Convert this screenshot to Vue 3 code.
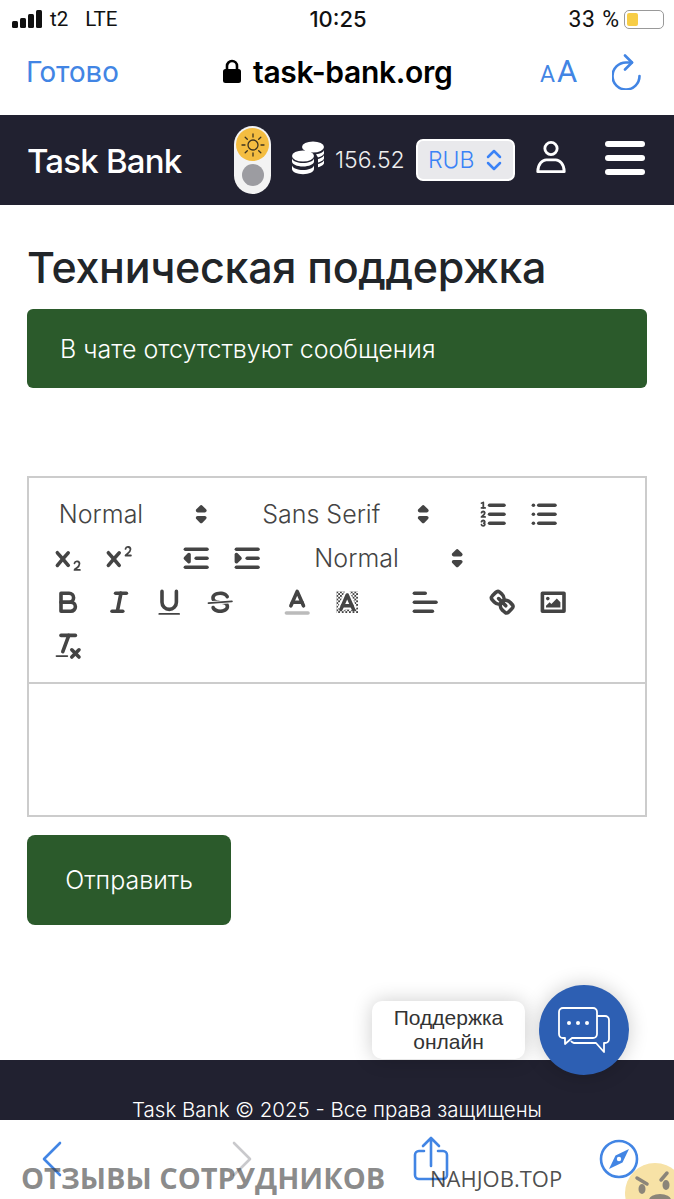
<template>
  <div class="screen">
    <!-- iOS status bar -->
    <div class="status">
      <div class="status-left">
        <span class="signal"><i></i><i></i><i></i><i></i></span>
        <span>t2</span>
        <span class="lte">LTE</span>
      </div>
      <div class="clock">10:25</div>
      <div class="status-right">
        <span class="percent">33 %</span>
        <span class="battery"><b></b></span>
      </div>
    </div>

    <!-- safari top bar -->
    <div class="browser">
      <span class="done">Готово</span>
      <div class="address">
        <svg width="20" height="25" viewBox="0 0 20 25">
          <path d="M5 11V7a5 5 0 0 1 10 0v4" fill="none" stroke="#000" stroke-width="2.6" />
          <rect x="1" y="10" width="18" height="14" rx="2.5" fill="#000" />
        </svg>
        <span>task-bank.org</span>
      </div>
      <span class="aa"><small>A</small>A</span>
      <svg class="reload" width="30" height="36" viewBox="0 0 30 36" fill="none" stroke="#4285e4" stroke-width="2.6" stroke-linecap="round" stroke-linejoin="round">
        <path d="M20 8.500H14A13.500 13.500 0 1 0 27.500 22" />
        <path d="M13 1.500l7 7-7 7" />
      </svg>
    </div>

    <!-- site header -->
    <header class="nav">
      <span class="brand">Task Bank</span>
      <div class="toggle">
        <span class="sun">
          <svg width="26" height="26" viewBox="0 0 26 26" fill="none" stroke="#3d3320" stroke-width="1.3" stroke-linecap="round">
            <circle cx="13" cy="13" r="5" />
            <path d="M13 2v3M13 21v3M2 13h3M21 13h3M5.2 5.2l2.1 2.1M18.7 18.7l2.1 2.1M5.2 20.8l2.1-2.1M18.7 7.3l2.1-2.1" />
          </svg>
        </span>
        <span class="moon"></span>
      </div>
      <svg class="coins" width="34" height="34" viewBox="0 0 34 34" fill="#fff">
        <ellipse cx="22" cy="6" rx="11" ry="5.5" />
        <path d="M25 13.2c4-.4 8-2 8-4.4v3.4c0 1.700-3 3.400-6 4.200zM27 18c3-.7 6-2.300 6-4.200v3.400c0 1.900-3 3.500-6 4.200zM27 23c3-.7 6-2.300 6-4.200v3.200c0 1.900-3 3.500-6 4.200z" />
        <ellipse cx="12" cy="15" rx="11" ry="5.500" />
        <path d="M1 17.500c1 2.800 5.500 4.500 11 4.500s10-1.700 11-4.500v3c0 2.800-5 5-11 5s-11-2.200-11-5zM1 24.500c1 2.800 5.500 4.500 11 4.500s10-1.700 11-4.500v3.500c0 3-5 5.200-11 5.200s-11-2.200-11-5.200z" />
      </svg>
      <span class="balance">156.52</span>
      <div class="currency">
        <span>RUB</span>
        <svg width="16" height="24" viewBox="0 0 16 24" fill="none" stroke="#3b82f6" stroke-width="2.500" stroke-linecap="round" stroke-linejoin="round">
          <path d="M2 9l6-6 6 6M2 15l6 6 6-6" />
        </svg>
      </div>
      <svg class="user" width="32" height="34" viewBox="0 0 32 36" fill="none" stroke="#fff" stroke-width="3">
        <circle cx="16" cy="9" r="6.500" />
        <path d="M2 33.500c0-8 5-12.500 9-12.500h10c4 0 9 4.500 9 12.500z" stroke-linejoin="round" />
      </svg>
      <div class="burger"><i></i><i></i><i></i></div>
    </header>

    <main class="content">
      <h1>Техническая поддержка</h1>
      <div class="alert">В чате отсутствуют сообщения</div>

      <div class="toolbar">
        <span class="picker header-p">Normal
          <svg viewBox="0 0 18 18"><polygon class="fs" points="7 11 9 13 11 11 7 11" /><polygon class="fs" points="7 7 9 5 11 7 7 7" /></svg>
        </span>
        <span class="picker font-p">Sans Serif
          <svg viewBox="0 0 18 18"><polygon class="fs" points="7 11 9 13 11 11 7 11" /><polygon class="fs" points="7 7 9 5 11 7 7 7" /></svg>
        </span>
        <span class="group">
          <button>
            <svg viewBox="0 0 18 18">
              <line class="st" x1="7" x2="15" y1="4" y2="4" /><line class="st" x1="7" x2="15" y1="9" y2="9" /><line class="st" x1="7" x2="15" y1="14" y2="14" />
              <line class="st thin" x1="2.500" x2="4.500" y1="5.500" y2="5.500" />
              <path class="fl" d="M3.500,6A0.500,0.500,0,0,1,3,5.500V3.085l-0.276.138A0.500,0.500,0,0,1,2.053,3c-0.124-.247-0.023-0.324.224-0.447l1-.500A0.500,0.500,0,0,1,4,2.500v3A0.500,0.500,0,0,1,3.500,6Z" />
              <path class="st thin" d="M4.500,10.500h-2c0-.234,1.850-1.076,1.850-2.234A0.959,0.959,0,0,0,2.500,8.156" />
              <path class="st thin" d="M2.500,14.846a0.959,0.959,0,0,0,1.850-.109A0.700,0.700,0,0,0,3.750,14a0.688,0.688,0,0,0,.600-0.736,0.959,0.959,0,0,0-1.850-.109" />
            </svg>
          </button>
          <button>
            <svg viewBox="0 0 18 18">
              <line class="st" x1="6" x2="15" y1="4" y2="4" /><line class="st" x1="6" x2="15" y1="9" y2="9" /><line class="st" x1="6" x2="15" y1="14" y2="14" />
              <line class="st" x1="3" x2="3" y1="4" y2="4" /><line class="st" x1="3" x2="3" y1="9" y2="9" /><line class="st" x1="3" x2="3" y1="14" y2="14" />
            </svg>
          </button>
        </span>
        <span class="group">
          <button>
            <svg viewBox="0 0 18 18">
              <path class="fl" d="M15.500,15H13.861a3.858,3.858,0,0,0,1.914-2.975,1.800,1.800,0,0,0-1.600-1.751A1.921,1.921,0,0,0,12.021,11.700a0.500,0.500,0,1,0,.957.291h0a0.914,0.914,0,0,1,1.053-.725,0.810,0.810,0,0,1,.744.762c0,1.076-1.170,1.870-1.940,2.431A1.456,1.456,0,0,0,12,15.500a0.500,0.500,0,0,0,.500.500h3A0.500,0.500,0,0,0,15.500,15Z" />
              <path class="fl" d="M9.650,5.241a1,1,0,0,0-1.409.108L6,7.964,3.759,5.349A1,1,0,0,0,2.192,6.592Q2.215,6.621,2.241,6.649L4.684,9.500,2.241,12.350A1,1,0,0,0,3.710,13.707q0.026-.028.049-.057L6,11.036,8.241,13.650a1,1,0,1,0,1.567-1.243Q9.785,12.378,9.759,12.350L7.316,9.500,9.759,6.651A1,1,0,0,0,9.650,5.241Z" />
            </svg>
          </button>
          <button>
            <svg viewBox="0 0 18 18">
              <path class="fl" d="M15.500,7H13.861a4.015,4.015,0,0,0,1.914-2.975,1.800,1.800,0,0,0-1.600-1.751A1.922,1.922,0,0,0,12.021,3.700a0.500,0.500,0,1,0,.957.291,0.917,0.917,0,0,1,1.053-.725,0.810,0.810,0,0,1,.744.762c0,1.077-1.164,1.925-1.934,2.486A1.423,1.423,0,0,0,12,7.500a0.500,0.500,0,0,0,.500.500h3A0.500,0.500,0,0,0,15.500,7Z" />
              <path class="fl" d="M9.651,5.241a1,1,0,0,0-1.410.108L6,7.964,3.759,5.349a1,1,0,1,0-1.519,1.300L4.683,9.500,2.240,12.350a1,1,0,1,0,1.519,1.300L6,11.036,8.241,13.650a1,1,0,0,0,1.519-1.300L7.317,9.500,9.759,6.651A1,1,0,0,0,9.651,5.241Z" />
            </svg>
          </button>
        </span>
        <span class="group">
          <button>
            <svg viewBox="0 0 18 18">
              <line class="st" x1="3" x2="15" y1="14" y2="14" /><line class="st" x1="3" x2="15" y1="4" y2="4" /><line class="st" x1="9" x2="15" y1="9" y2="9" />
              <polyline class="fs" points="5 7 5 11 3 9 5 7" />
            </svg>
          </button>
          <button>
            <svg viewBox="0 0 18 18">
              <line class="st" x1="3" x2="15" y1="14" y2="14" /><line class="st" x1="3" x2="15" y1="4" y2="4" /><line class="st" x1="9" x2="15" y1="9" y2="9" />
              <polyline class="fs" points="3 7 3 11 5 9 3 7" />
            </svg>
          </button>
        </span>
        <span class="picker header-p">Normal
          <svg viewBox="0 0 18 18"><polygon class="fs" points="7 11 9 13 11 11 7 11" /><polygon class="fs" points="7 7 9 5 11 7 7 7" /></svg>
        </span>
        <span class="group">
          <button>
            <svg viewBox="0 0 18 18">
              <path class="st" d="M5,4H9.500A2.500,2.500,0,0,1,12,6.500v0A2.500,2.500,0,0,1,9.500,9H5V4Z" />
              <path class="st" d="M5,9h5.500A2.500,2.500,0,0,1,13,11.500v0A2.500,2.500,0,0,1,10.500,14H5V9Z" />
            </svg>
          </button>
          <button>
            <svg viewBox="0 0 18 18">
              <line class="st" x1="7" x2="13" y1="4" y2="4" /><line class="st" x1="5" x2="11" y1="14" y2="14" /><line class="st" x1="8" x2="10" y1="14" y2="4" />
            </svg>
          </button>
          <button>
            <svg viewBox="0 0 18 18">
              <path class="st" d="M5,3V9a4,4,0,0,0,4,4H9a4,4,0,0,0,4-4V3" />
              <rect class="fl" height="1" rx=".5" ry=".5" width="12" x="3" y="15" />
            </svg>
          </button>
          <button>
            <svg viewBox="0 0 18 18">
              <line class="st thin" x1="15.500" x2="2.500" y1="8.500" y2="9.500" />
              <path class="fl" d="M9.007,8C6.542,7.791,6,7.519,6,6.500,6,5.792,7.283,5,9,5c1.571,0,2.765.679,2.969,1.309a1,1,0,0,0,1.900-.617C13.356,4.106,11.354,3,9,3,6.200,3,4,4.538,4,6.500a3.200,3.200,0,0,0,.500,1.843Z" />
              <path class="fl" d="M8.984,10C11.457,10.208,12,10.479,12,11.500c0,.708-1.283,1.500-3,1.500-1.571,0-2.765-.679-2.969-1.309a1,1,0,1,0-1.900.617C4.644,13.894,6.646,15,9,15c2.800,0,5-1.538,5-3.500a3.200,3.200,0,0,0-.500-1.843Z" />
            </svg>
          </button>
        </span>
        <span class="group">
          <button>
            <svg viewBox="0 0 18 18">
              <line class="label" x1="3" x2="15" y1="15" y2="15" />
              <polyline class="st" points="5.500 11 9 3 12.500 11" />
              <line class="st" x1="11.630" x2="6.380" y1="9" y2="9" />
            </svg>
          </button>
          <button>
            <svg viewBox="0 0 18 18">
              <defs>
                <pattern id="dots" width="2" height="2" patternUnits="userSpaceOnUse">
                  <rect width="1" height="1" fill="#444" /><rect x="1" y="1" width="1" height="1" fill="#444" />
                </pattern>
              </defs>
              <rect x="3" y="3" width="12" height="12" fill="url(#dots)" />
              <polyline class="halo" points="5.500 13 9 5 12.500 13" />
              <line class="halo" x1="11.630" x2="6.380" y1="11" y2="11" />
              <polyline class="st" points="5.500 13 9 5 12.500 13" />
              <line class="st" x1="11.630" x2="6.380" y1="11" y2="11" />
            </svg>
          </button>
        </span>
        <span class="group">
          <button>
            <svg viewBox="0 0 18 18">
              <line class="st" x1="3" x2="15" y1="9" y2="9" /><line class="st" x1="3" x2="13" y1="14" y2="14" /><line class="st" x1="3" x2="9" y1="4" y2="4" />
            </svg>
          </button>
        </span>
        <span class="group">
          <button>
            <svg viewBox="0 0 18 18">
              <line class="st" x1="7" x2="11" y1="7" y2="11" />
              <path class="st" d="M8.900,4.577a3.476,3.476,0,0,1,.360,4.679A3.476,3.476,0,0,1,4.577,8.900C3.185,7.500,2.231,6.754,3.680,5.300L5.300,3.680C6.754,2.231,7.500,3.185,8.900,4.577Z" />
              <path class="st" d="M13.423,9.100a3.476,3.476,0,0,0-4.679-.360,3.476,3.476,0,0,0,.360,4.679c1.392,1.392,2.146,2.346,3.600.900l1.620-1.620C15.769,11.246,14.815,10.500,13.423,9.100Z" />
            </svg>
          </button>
          <button>
            <svg viewBox="0 0 18 18">
              <rect class="st" height="10" width="12" x="3" y="4" />
              <circle class="fl" cx="6" cy="7" r="1" />
              <polyline class="fl" points="5 12 5 11 7 9 8 10 11 7 13 9 13 12 5 12" />
            </svg>
          </button>
        </span>
        <span class="group">
          <button>
            <svg viewBox="0 0 18 18">
              <line class="st" x1="5" x2="13" y1="3" y2="3" /><line class="st" x1="6" x2="9.350" y1="12" y2="3" />
              <line class="st" x1="11" x2="15" y1="11" y2="15" /><line class="st" x1="15" x2="11" y1="11" y2="15" />
              <rect class="fl" height="1" rx=".5" ry=".5" width="7" x="2" y="14" />
            </svg>
          </button>
        </span>
      </div>
      <div class="editor"></div>

      <button class="send">Отправить</button>
    </main>

    <footer class="footer">Task Bank © 2025 - Все права защищены</footer>

    <!-- safari bottom bar -->
    <div class="bottom">
      <svg width="22" height="36" viewBox="0 0 22 36" fill="none" stroke="#4285e4" stroke-width="2.600" stroke-linecap="round" stroke-linejoin="round">
        <path d="M19 2L3 18l16 16" />
      </svg>
      <svg class="fwd" width="22" height="36" viewBox="0 0 22 36" fill="none" stroke="#c9c9cc" stroke-width="2.600" stroke-linecap="round" stroke-linejoin="round">
        <path d="M3 2l16 16L3 34" />
      </svg>
      <svg class="share" width="36" height="46" viewBox="0 0 36 46" fill="none" stroke="#4285e4" stroke-width="2.600" stroke-linecap="round" stroke-linejoin="round">
        <path d="M11 15H6a4 4 0 0 0-4 4v20a4 4 0 0 0 4 4h24a4 4 0 0 0 4-4V19a4 4 0 0 0-4-4h-5" />
        <path d="M18 30V2M10 10l8-8 8 8" />
      </svg>
      <svg class="compass" width="40" height="40" viewBox="0 0 40 40">
        <circle cx="20" cy="20" r="18" fill="none" stroke="#4285e4" stroke-width="2.600" />
        <path d="M30 10L23.500 23.500 10 30l6.500-13.500z" fill="#4285e4" />
        <circle cx="20" cy="20" r="2.200" fill="#fff" />
      </svg>
    </div>

    <!-- support widget -->
    <div class="support">
      <div class="support-label">Поддержка<br />онлайн</div>
      <div class="support-btn">
        <svg width="52" height="46" viewBox="0 0 52 46" fill="none" stroke="#fff" stroke-width="1.800" stroke-linejoin="round">
          <path d="M5 1h30a4 4 0 0 1 4 4v22a4 4 0 0 1-4 4H14l-7 6v-6H5a4 4 0 0 1-4-4V5a4 4 0 0 1 4-4z" />
          <path d="M39 9h8a4 4 0 0 1 4 4v19a4 4 0 0 1-4 4h-1v9l-8-9H16a5 5 0 0 1-3-2" />
          <circle cx="11" cy="16" r="2" fill="#fff" stroke="none" />
          <circle cx="20" cy="16" r="2" fill="#fff" stroke="none" />
          <circle cx="29" cy="16" r="2" fill="#fff" stroke="none" />
        </svg>
      </div>
    </div>

    <!-- watermark lying over the bottom bar -->
    <span class="mark-a">ОТЗЫВЫ СОТРУДНИКОВ</span>
    <span class="mark-b">NAHJOB.TOP</span>
    <svg class="mark-face" width="52" height="39" viewBox="0 0 52 39">
      <circle cx="33" cy="33" r="30" fill="#f7e2a6" />
      <path d="M15 18l10 6M39 20l6-7" stroke="#8b8579" stroke-width="3.500" stroke-linecap="round" />
      <ellipse cx="20" cy="29" rx="3.500" ry="5" fill="#8b8579" />
      <ellipse cx="44" cy="25" rx="3.500" ry="5" fill="#8b8579" />
      <ellipse cx="38" cy="40" rx="11" ry="6" fill="#8b8579" />
    </svg>
  </div>
</template>

<script setup>
</script>

<style>
html, body {
  margin: 0;
  background: #fff;
}
</style>

<style scoped>
.screen {
  position: relative;
  display: flex;
  flex-direction: column;
  width: 674px;
  height: 1199px;
  overflow: hidden;
  background: #fff;
  color: #212529;
  font-family: Inter, "Noto Sans", sans-serif;
}

.status {
  display: flex;
  align-items: center;
  justify-content: space-between;
  height: 38px;
  padding: 0 10px 0 12px;
  font-family: Roboto, sans-serif;
  font-size: 20.500px;
  color: #111;
  flex-shrink: 0;
}
.status-left, .status-right {
  display: flex;
  align-items: center;
  width: 220px;
}
.status-left { gap: 8px; }
.status-right { justify-content: flex-end; gap: 4px; }
.percent { font-size: 23px; letter-spacing: 0.8px; }
.lte { margin-left: 9px; }
.signal {
  display: flex;
  align-items: flex-end;
  gap: 2px;
  height: 18px;
}
.signal i {
  display: block;
  width: 6px;
  background: #111;
  border-radius: 1.5px;
}
.signal i:nth-child(1) { height: 7px; }
.signal i:nth-child(2) { height: 10px; }
.signal i:nth-child(3) { height: 14px; }
.signal i:nth-child(4) { height: 18px; }
.clock {
  font-size: 22px;
  font-weight: 500;
  font-family: Inter, sans-serif;
}
.battery {
  display: block;
  width: 40px;
  height: 19px;
  border: 1.500px solid #999;
  border-radius: 5px;
  padding: 2px;
  box-sizing: border-box;
}
.battery b {
  display: block;
  width: 11px;
  height: 100%;
  background: #f7cd46;
  border-radius: 2px;
}

.browser {
  display: flex;
  align-items: center;
  height: 77px;
  padding: 0 32px 10px 26px;
  box-sizing: border-box;
  flex-shrink: 0;
}
.done {
  width: 196px;
  font-family: Roboto, sans-serif;
  font-size: 29px;
  color: #4285e4;
}
.address {
  display: flex;
  align-items: center;
  gap: 11px;
  width: 318px;
  font-family: Inter, sans-serif;
  font-size: 30px;
  font-weight: 600;
  color: #000;
  letter-spacing: -0.3px;
}
.aa {
  font-family: Roboto, sans-serif;
  font-size: 31px;
  color: #4285e4;
  width: 72px;
}
.aa small {
  font-size: 23px;
  margin-right: 2px;
}

.nav {
  display: flex;
  align-items: center;
  height: 90px;
  padding: 0 29px 0 27px;
  box-sizing: border-box;
  background: #212130;
  color: #fff;
  flex-shrink: 0;
}
.brand {
  width: 207px;
  font-size: 33px;
  font-weight: 500;
  letter-spacing: -0.800px;
  margin-top: 2px;
}
.toggle {
  display: flex;
  flex-direction: column;
  align-items: center;
  justify-content: space-between;
  width: 37px;
  height: 68px;
  padding: 2px 0 8px;
  box-sizing: border-box;
  border-radius: 19px;
  background: #f3f3f3;
  margin-right: 20px;
}
.sun {
  display: flex;
  align-items: center;
  justify-content: center;
  width: 33px;
  height: 33px;
  border-radius: 50%;
  background: #f4bd41;
}
.moon {
  width: 22px;
  height: 22px;
  border-radius: 50%;
  background: #9c9ca1;
}
.coins { margin: 0 10px 4px 0; }
.balance {
  width: 81px;
  font-size: 23px;
  font-weight: 300;
  color: #eee;
}
.currency {
  display: flex;
  align-items: center;
  justify-content: space-between;
  width: 99px;
  height: 42px;
  padding: 0 11px 0 10px;
  box-sizing: border-box;
  border: 2px solid #fff;
  border-radius: 7px;
  background: #e9e9ec;
  color: #3b82f6;
  font-size: 23px;
  font-weight: 300;
  margin-right: 20px;
}
.user { margin: 0 38px 6px 0; }
.burger {
  display: flex;
  flex-direction: column;
  gap: 8px;
  margin-bottom: 4px;
}
.burger i {
  display: block;
  width: 40px;
  height: 6px;
  border-radius: 3px;
  background: #fff;
}

.content {
  flex: 1;
  padding: 0 27px;
  min-height: 0;
}
h1 {
  margin: 35px 0 15px;
  font-size: 43px;
  line-height: 54px;
  font-weight: 500;
  color: #212529;
  letter-spacing: -0.3px;
}
.alert {
  height: 79px;
  padding: 0 33px;
  box-sizing: border-box;
  display: flex;
  align-items: center;
  border-radius: 6px;
  background: #2b5a2b;
  color: #fff;
  font-size: 25px;
  font-weight: 300;
}
.toolbar {
  display: flex;
  flex-wrap: wrap;
  margin-top: 88px;
  padding: 14px 14.400px;
  border: 2px solid #ccc;
  box-sizing: border-box;
  font-size: 25px;
  font-weight: 300;
  color: #444;
}
.group {
  display: flex;
  margin-right: 27px;
}
.group button {
  display: block;
  width: 50.400px;
  height: 44px;
  padding: 5.800px 9px;
  border: 0;
  background: none;
  box-sizing: border-box;
}
.group svg {
  display: block;
  width: 32.400px;
  height: 32.400px;
}
.picker {
  display: flex;
  align-items: center;
  justify-content: space-between;
  height: 44px;
  margin-right: 27px;
  padding-left: 15.400px;
  box-sizing: border-box;
}
.picker svg {
  width: 32.400px;
  height: 32.400px;
  margin-right: 2px;
}
.header-p { width: 176.400px; }
.font-p { width: 194.400px; }
.st {
  fill: none;
  stroke: #444;
  stroke-width: 2;
  stroke-linecap: round;
  stroke-linejoin: round;
}
.st.thin { stroke-width: 1; }
.fl { fill: #444; }
.fs {
  fill: #444;
  stroke: #444;
  stroke-width: 2;
  stroke-linejoin: round;
  stroke-linecap: round;
}
.label {
  fill: none;
  stroke: #bbb;
  stroke-width: 2;
  stroke-linecap: round;
}
.halo {
  fill: none;
  stroke: #fff;
  stroke-width: 4;
}
.editor {
  height: 133px;
  border: 2px solid #ccc;
  border-top: 0;
  box-sizing: border-box;
}
.send {
  display: block;
  width: 204px;
  height: 90px;
  margin-top: 18px;
  border: 0;
  border-radius: 8px;
  background: #2b5a2b;
  color: #fff;
  font-family: Inter, sans-serif;
  font-size: 25px;
  font-weight: 300;
}

.footer {
  height: 60px;
  padding-top: 39px;
  box-sizing: border-box;
  background: #212130;
  color: #fff;
  text-align: center;
  font-size: 20.500px;
  font-weight: 300;
  line-height: 21px;
  flex-shrink: 0;
}

.bottom {
  display: flex;
  align-items: center;
  height: 79px;
  padding: 0 0 2px 41px;
  box-sizing: border-box;
  background: #fff;
  flex-shrink: 0;
}
.fwd { margin-left: 168px; }
.share { margin-left: 160px; }
.compass { margin-left: 150px; }

.support {
  position: absolute;
  left: 372px;
  top: 985px;
  display: flex;
  align-items: center;
  gap: 14px;
}
.support-label {
  width: 153px;
  height: 58px;
  padding-top: 5px;
  box-sizing: border-box;
  border-radius: 10px;
  background: #fff;
  box-shadow: 0 0 20px rgba(0, 0, 0, 0.2);
  text-align: center;
  font-family: "Liberation Sans", sans-serif;
  font-size: 21px;
  line-height: 24px;
  color: #333;
}
.support-btn {
  display: flex;
  align-items: center;
  justify-content: center;
  width: 90px;
  height: 90px;
  border-radius: 50%;
  background: #2d5fb3;
  box-shadow: 0 0 20px rgba(0, 0, 0, 0.2);
}

.mark-a {
  position: absolute;
  left: 21px;
  top: 1158px;
  font-family: "Open Sans", sans-serif;
  font-weight: 700;
  font-size: 29px;
  line-height: 40px;
  color: rgba(60, 60, 60, 0.6);
  white-space: nowrap;
}
.mark-b {
  position: absolute;
  left: 430px;
  top: 1162px;
  font-family: "Open Sans", sans-serif;
  font-size: 22px;
  line-height: 32px;
  color: rgba(30, 30, 30, 0.8);
  white-space: nowrap;
}
.mark-face {
  position: absolute;
  left: 622px;
  top: 1160px;
}
</style>
